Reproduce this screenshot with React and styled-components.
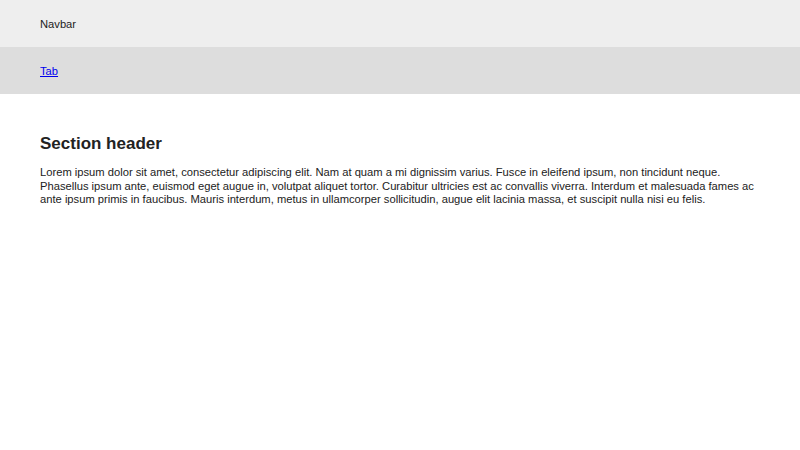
import React from "react"
import styled, { createGlobalStyle } from "styled-components"

const Global = createGlobalStyle`
  body {
    margin: 0;
    font-family: "Liberation Sans", Arial, sans-serif;
    font-size: 11.2px;
    color: #222;
    background: #fff;
  }
`

const Navbar = styled.div`
  background-color: #eeeeee;
  align-items: center;
  padding: 0 40px;
  display: flex;
  height: 47px;
`

const TabBar = styled.div`
  background-color: #dddddd;
  align-items: center;
  padding: 0 40px;
  display: flex;
  height: 47px;
`

const TabLink = styled.a`
  color: #0000ee;
  text-decoration: underline;
`

const Main = styled.main`
  padding: 40px 40px;
`

const SectionHeader = styled.h2`
  font-size: 17px;
  font-weight: bold;
  margin: 0 0 12px;
`

const Paragraph = styled.p`
  line-height: 13.5px;
  margin: 0;
`

export default function App() {
  return (
    <>
      <Global />
      <Navbar>Navbar</Navbar>
      <TabBar>
        <TabLink href="#">Tab</TabLink>
      </TabBar>
      <Main>
        <SectionHeader>Section header</SectionHeader>
        <Paragraph>
          Lorem ipsum dolor sit amet, consectetur adipiscing elit. Nam at quam a mi dignissim varius. Fusce in eleifend ipsum, non tincidunt neque. Phasellus ipsum ante, euismod eget augue in, volutpat aliquet tortor. Curabitur ultricies est ac convallis viverra. Interdum et malesuada fames ac ante ipsum primis in faucibus. Mauris interdum, metus in ullamcorper sollicitudin, augue elit lacinia massa, et suscipit nulla nisi eu felis.
        </Paragraph>
      </Main>
    </>
  )
}
